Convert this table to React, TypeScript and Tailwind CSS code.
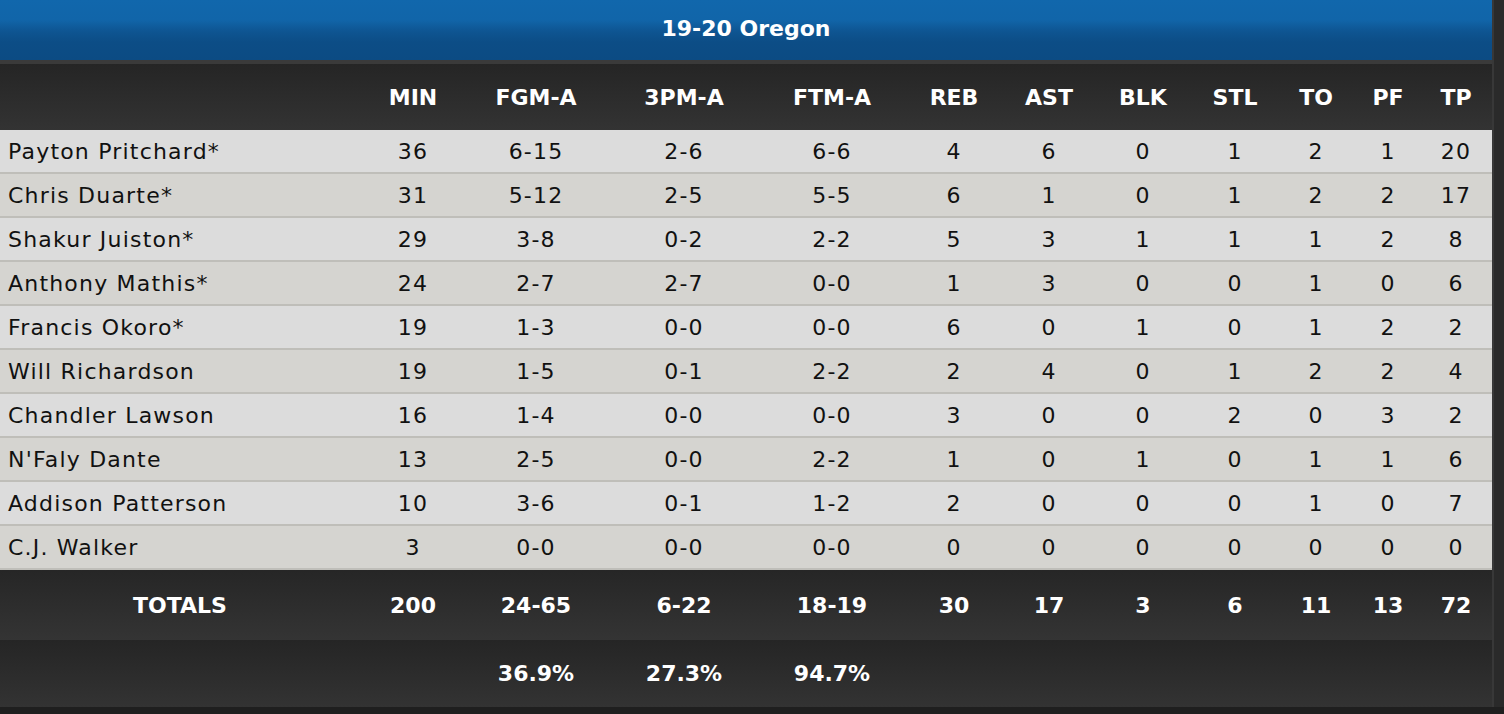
import React from "react";

const cols =
  "grid grid-cols-[360px_106px_140px_156px_140px_104px_86px_102px_82px_80px_64px_72px]";

const headers = ["MIN", "FGM-A", "3PM-A", "FTM-A", "REB", "AST", "BLK", "STL", "TO", "PF", "TP"];

const rows: [string, ...string[]][] = [
  ["Payton Pritchard*", "36", "6-15", "2-6", "6-6", "4", "6", "0", "1", "2", "1", "20"],
  ["Chris Duarte*", "31", "5-12", "2-5", "5-5", "6", "1", "0", "1", "2", "2", "17"],
  ["Shakur Juiston*", "29", "3-8", "0-2", "2-2", "5", "3", "1", "1", "1", "2", "8"],
  ["Anthony Mathis*", "24", "2-7", "2-7", "0-0", "1", "3", "0", "0", "1", "0", "6"],
  ["Francis Okoro*", "19", "1-3", "0-0", "0-0", "6", "0", "1", "0", "1", "2", "2"],
  ["Will Richardson", "19", "1-5", "0-1", "2-2", "2", "4", "0", "1", "2", "2", "4"],
  ["Chandler Lawson", "16", "1-4", "0-0", "0-0", "3", "0", "0", "2", "0", "3", "2"],
  ["N'Faly Dante", "13", "2-5", "0-0", "2-2", "1", "0", "1", "0", "1", "1", "6"],
  ["Addison Patterson", "10", "3-6", "0-1", "1-2", "2", "0", "0", "0", "1", "0", "7"],
  ["C.J. Walker", "3", "0-0", "0-0", "0-0", "0", "0", "0", "0", "0", "0", "0"],
];

const totals = ["200", "24-65", "6-22", "18-19", "30", "17", "3", "6", "11", "13", "72"];
const pcts = ["", "36.9%", "27.3%", "94.7%", "", "", "", "", "", "", ""];

export default function App() {
  return (
    <div
      className="w-[1504px] h-[714px] overflow-hidden bg-[#1f1f1f] flex"
      style={{ fontFamily: '"DejaVu Sans", Verdana, sans-serif' }}
    >
      <div className="w-[1492px] flex flex-col">
        <div className="h-[60px] flex items-center justify-center bg-[linear-gradient(to_bottom,#1167ac_0%,#1165a9_33%,#0e5592_52%,#0c4d86_70%,#0c4b83_100%)] text-white font-bold text-[22px] pb-[4px]">
          19-20 Oregon
        </div>
        <div className="h-[4px] bg-[#3a3a3a]" />
        <div
          className={`${cols} h-[66px] items-center text-white font-bold text-[22px] bg-[linear-gradient(to_bottom,#252525,#333333)]`}
        >
          <div />
          {headers.map((h) => (
            <div key={h} className="text-center">
              {h}
            </div>
          ))}
        </div>
        {rows.map((r, i) => (
          <div
            key={r[0]}
            className={`${cols} h-[44px] items-center text-[22px] tracking-[1.2px] text-[#111111] border-b-2 border-[#bfbeb9] ${
              i % 2 === 0 ? "bg-[#dcdcdc]" : "bg-[#d5d4d0]"
            }`}
          >
            <div className="pl-[8px] whitespace-nowrap">{r[0]}</div>
            {r.slice(1).map((v, j) => (
              <div key={j} className="text-center">
                {v}
              </div>
            ))}
          </div>
        ))}
        <div
          className={`${cols} h-[70px] items-center text-white font-bold text-[22px] bg-[linear-gradient(to_bottom,#262626,#343434)]`}
        >
          <div className="text-center">TOTALS</div>
          {totals.map((v, j) => (
            <div key={j} className="text-center">
              {v}
            </div>
          ))}
        </div>
        <div
          className={`${cols} h-[67px] items-center text-white font-bold text-[22px] bg-[linear-gradient(to_bottom,#252525,#333333)]`}
        >
          <div />
          {pcts.map((v, j) => (
            <div key={j} className="text-center">
              {v}
            </div>
          ))}
        </div>
      </div>
      <div className="w-[2px] h-[707px] bg-[#383838]" />
      <div className="flex-1 h-[707px] bg-[#2a2a2a]" />
    </div>
  );
}
